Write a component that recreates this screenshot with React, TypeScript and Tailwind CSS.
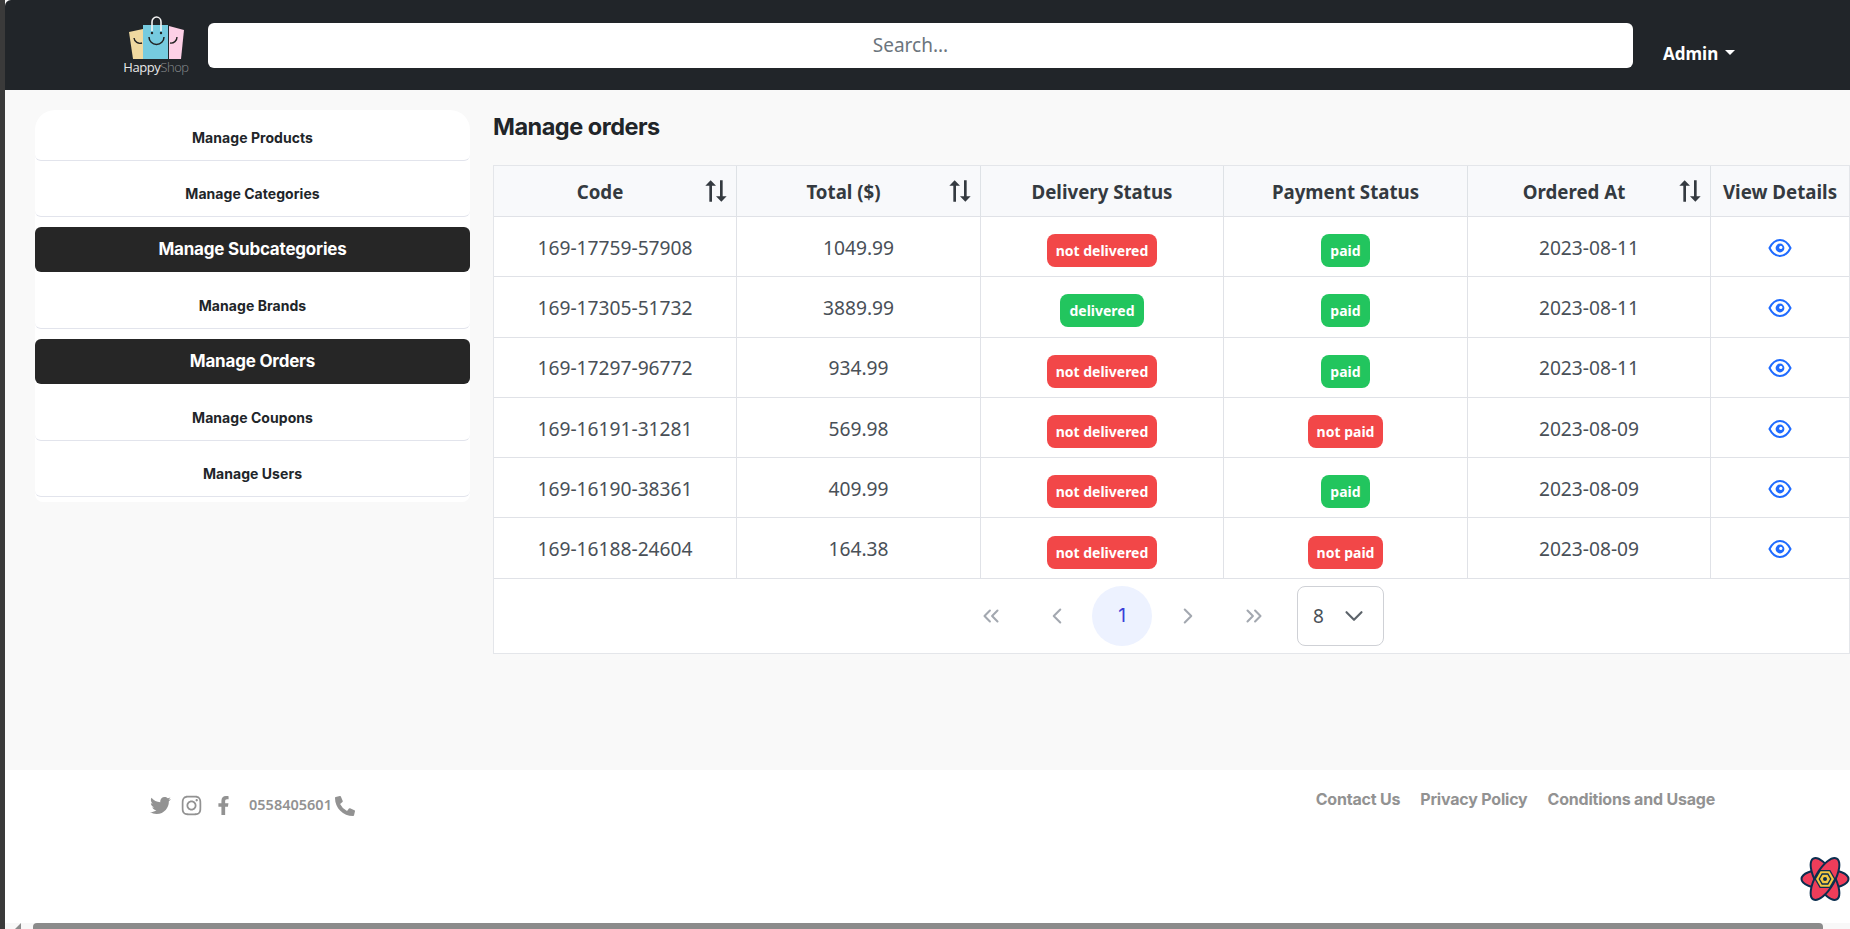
import { BiSortAlt2 } from 'react-icons/bi';
import { FaTwitter, FaFacebookF, FaPhoneAlt } from 'react-icons/fa';
import { AiOutlineInstagram } from 'react-icons/ai';
import { ChevronDown, ChevronLeft, ChevronRight, ChevronsLeft, ChevronsRight } from 'lucide-react';

const NAV = [
    { label: 'Manage Products' },
    { label: 'Manage Categories' },
    { label: 'Manage Subcategories', active: true },
    { label: 'Manage Brands' },
    { label: 'Manage Orders', active: true },
    { label: 'Manage Coupons' },
    { label: 'Manage Users' },
];

const ORDERS = [
    { code: '169-17759-57908', total: '1049.99', delivered: false, paid: true, date: '2023-08-11' },
    { code: '169-17305-51732', total: '3889.99', delivered: true, paid: true, date: '2023-08-11' },
    { code: '169-17297-96772', total: '934.99', delivered: false, paid: true, date: '2023-08-11' },
    { code: '169-16191-31281', total: '569.98', delivered: false, paid: false, date: '2023-08-09' },
    { code: '169-16190-38361', total: '409.99', delivered: false, paid: true, date: '2023-08-09' },
    { code: '169-16188-24604', total: '164.38', delivered: false, paid: false, date: '2023-08-09' },
];

const COLS = 'grid grid-cols-[243px_244px_243px_244px_243px_138px]';

function Logo() {
    return (
        <div className="flex flex-col items-center w-[64px]">
            <svg width="56" height="44" viewBox="0 0 56 44">
                <path d="M0 16 L14 13 L14 43 L4 43 Z" fill="#f0d9a0" />
                <path d="M40 10 L55 14 L52 43 L40 43 Z" fill="#fdd0e6" />
                <rect x="14" y="9" width="25" height="34" fill="#76cbdf" />
                <path d="M23 15 V6 a4.5 5 0 0 1 9 0 V15" fill="none" stroke="#f4f4f4" strokeWidth="1.6" />
                <circle cx="23" cy="17" r="1.2" fill="#222" />
                <circle cx="32" cy="17" r="1.2" fill="#222" />
                <path d="M20 21 a7.5 7.5 0 0 0 15 0" fill="none" stroke="#222" strokeWidth="1.5" />
                <path d="M5 22 a6 6 0 0 0 8 5 M41 27 a6 6 0 0 0 7 -6" fill="none" stroke="#222" strokeWidth="1.4" />
            </svg>
            <span className="ml-[-2px] text-[13px] leading-[14px] font-['Open_Sans',sans-serif] tracking-[-0.45px] text-[#e8e8e8]">
                Happy<span className="text-[#8a8d90] font-light">Shop</span>
            </span>
        </div>
    );
}

function Header() {
    return (
        <header className="h-[90px] shrink-0 bg-[#212529] rounded-tl-[6px] flex items-center">
            <div className="ml-[120px]">
                <Logo />
            </div>
            <div className="ml-[19px] w-[1425px] h-[45px] bg-white rounded-[6px] flex items-center justify-center text-[#6c757d] text-[19px] font-['Noto_Sans',sans-serif]">
                <span className="ml-[-20px]">Search...</span>
            </div>
            <div className="ml-[30px] mt-[17px] flex items-center text-white text-[17px] font-bold font-['Noto_Sans',sans-serif]">
                Admin
                <span className="ml-[7px] mt-[-2px] border-x-[5px] border-x-transparent border-t-[5px] border-t-white" />
            </div>
        </header>
    );
}

function Sidebar() {
    return (
        <aside className="w-[435px] ml-[30px] mt-[20px] shrink-0">
            <div className="flex flex-col bg-white rounded-t-[20px] rounded-b-[8px] pt-[5px] pb-[5px]">
                {NAV.map((item) =>
                    item.active ? (
                        <div
                            key={item.label}
                            className="h-[45px] mt-[10px] mb-[1px] bg-[#262626] rounded-[6px] flex items-center justify-center text-white text-[17px] font-bold font-['Inter',sans-serif] tracking-[-0.2px]"
                        >
                            {item.label}
                        </div>
                    ) : (
                        <div
                            key={item.label}
                            className="h-[46px] mt-[10px] first:mt-0 flex items-center justify-center rounded-b-[6px] border-b border-[#e2e4ec] text-[#212529] text-[14px] font-bold font-['Inter',sans-serif] tracking-[0.05px]"
                        >
                            {item.label}
                        </div>
                    ),
                )}
            </div>
        </aside>
    );
}

function Badge({ ok, text }: { ok: boolean; text: string }) {
    return (
        <span className={`inline-block mt-[8px] h-[33px] leading-[33px] px-[9px] rounded-[8px] text-white text-[14px] font-bold font-['Noto_Sans',sans-serif] ${ok ? 'bg-[#22c55e]' : 'bg-[#f24748]'}`}>
            {text}
        </span>
    );
}

function EyeIcon() {
    return (
        <svg viewBox="0 0 24 20" className="mt-[2px] w-[24px] h-[20px] text-[#1f6bff]">
            <path d="M1.5 10 C4 5 8 2 12 2 C16 2 20 5 22.5 10 C20 15 16 18 12 18 C8 18 4 15 1.5 10Z" fill="none" stroke="currentColor" strokeWidth="2" />
            <circle cx="12" cy="10" r="4.4" fill="currentColor" />
            <circle cx="12.8" cy="9.4" r="1.6" fill="#fff" />
        </svg>
    );
}

function HeadCell({ label, sort }: { label: string; sort?: boolean }) {
    return (
        <div className="relative flex items-center justify-center border-r border-[#dee2e6] last:border-r-0">
            <span className={sort ? 'mr-[30px] pt-[2px]' : 'pt-[2px]'}>{label}</span>
            {sort && <BiSortAlt2 className="absolute right-[4px] text-[32px] text-[#343a40]" />}
        </div>
    );
}

function Orders() {
    return (
        <main className="ml-[23px] mt-[19px] flex-1 min-w-0">
            <h1 className="h-[35px] mb-[21px] text-[23.5px] leading-[35px] font-bold text-[#212529] font-['Inter',sans-serif] tracking-[-0.5px]">Manage orders</h1>
            <div className="bg-white border border-[#e4e6ea] font-['Noto_Sans',sans-serif]">
                <div className={`${COLS} h-[50px] bg-[#f8f9fb] text-[18.7px] font-bold text-[#343a40]`}>
                    <HeadCell label="Code" sort />
                    <HeadCell label="Total ($)" sort />
                    <HeadCell label="Delivery Status" />
                    <HeadCell label="Payment Status" />
                    <HeadCell label="Ordered At" sort />
                    <HeadCell label="View Details" />
                </div>
                {ORDERS.map((o) => (
                    <div key={o.code} className={`${COLS} h-[60.3px] border-t border-[#e0e2e7] text-[19.2px] text-[#495057] [&>div]:flex [&>div]:items-center [&>div]:justify-center [&>div]:border-r [&>div]:border-[#e0e2e7] [&>div:last-child]:border-r-0`}>
                        <div><span className="pt-[3px]">{o.code}</span></div>
                        <div><span className="pt-[3px]">{o.total}</span></div>
                        <div><Badge ok={o.delivered} text={o.delivered ? 'delivered' : 'not delivered'} /></div>
                        <div><Badge ok={o.paid} text={o.paid ? 'paid' : 'not paid'} /></div>
                        <div><span className="pt-[3px]">{o.date}</span></div>
                        <div><EyeIcon /></div>
                    </div>
                ))}
                <div className="h-[75px] border-t border-[#e0e2e7] flex items-center pl-[484px] text-[#a3a8b0]">
                    <ChevronsLeft size={26} strokeWidth={1.9} />
                    <ChevronLeft size={26} strokeWidth={1.9} className="ml-[40px]" />
                    <div className="ml-[22px] w-[60px] h-[60px] rounded-full bg-[#edf2ff] flex items-center justify-center text-[#3b3fd8] text-[19px] font-['Inter',sans-serif]">1</div>
                    <ChevronRight size={26} strokeWidth={1.9} className="ml-[23px]" />
                    <ChevronsRight size={26} strokeWidth={1.9} className="ml-[40px]" />
                    <div className="ml-[30px] w-[87px] h-[60px] border border-[#cfd1d6] rounded-[8px] flex items-center pl-[15px] text-[#495057] text-[19px]">
                        8
                        <ChevronDown size={30} strokeWidth={1.7} className="ml-[15px] text-[#5c636a]" />
                    </div>
                </div>
            </div>
        </main>
    );
}

function Footer() {
    return (
        <footer className="h-[159px] shrink-0 bg-white flex items-start pt-[23px] text-[#929292] text-[16px] font-bold">
            <div className="ml-[145px] flex items-center font-['Noto_Sans',sans-serif]">
                <FaTwitter className="text-[21px]" />
                <AiOutlineInstagram className="text-[25px] ml-[8px]" />
                <FaFacebookF className="text-[19px] ml-[10px]" />
                <span className="ml-[16px] text-[14.5px] font-semibold mt-[-1px]">0558405601</span>
                <FaPhoneAlt className="text-[20px] ml-[3px]" />
            </div>
            <div className="ml-auto mr-[135px] mt-[-6px] flex gap-[20px] font-['Inter',sans-serif] tracking-[-0.2px]">
                <span>Contact Us</span>
                <span>Privacy Policy</span>
                <span>Conditions and Usage</span>
            </div>
        </footer>
    );
}

function hex(r: number) {
    return [0, 60, 120, 180, 240, 300]
        .map((a) => `${25 + r * Math.cos((a * Math.PI) / 180)},${23 + r * Math.sin((a * Math.PI) / 180)}`)
        .join(' ');
}

function ReactQueryMark() {
    return (
        <svg viewBox="0 0 50 46" className="absolute right-0 bottom-[27px] w-[50px] h-[46px]">
            <g fill="#ef3d5a" stroke="#0b2e4f" strokeWidth="2">
                <ellipse cx="25" cy="23" rx="23.5" ry="9.5" />
                <ellipse cx="25" cy="23" rx="23.5" ry="9.5" transform="rotate(60 25 23)" />
                <ellipse cx="25" cy="23" rx="23.5" ry="9.5" transform="rotate(120 25 23)" />
            </g>
            <polygon points={hex(10.5)} fill="#0b2e4f" />
            <polygon points={hex(9)} fill="#f4c842" />
            <polygon points={hex(6.5)} fill="#0b2e4f" />
            <polygon points={hex(5)} fill="#f4c842" />
            <circle cx="25" cy="23" r="2" fill="#0b2e4f" />
        </svg>
    );
}

function Scrollbar() {
    return (
        <div className="absolute left-[5px] right-0 bottom-0 h-[6px] bg-[#f8f8f8] flex items-center">
            <span className="ml-[10px] border-b-[6px] border-l-[6px] border-b-[#8b8b8b] border-l-transparent" />
            <div className="ml-[12px] w-[1790px] h-[6px] rounded-t-[4px] bg-[#8b8b8b]" />
        </div>
    );
}

export default function App() {
    return (
        <div className="relative flex h-[929px] w-[1850px] overflow-hidden bg-[#3a3a3a]">
            <div className="w-[5px] shrink-0" />
            <div className="flex-1 min-w-0 flex flex-col bg-[#f9f9f9]">
                <Header />
                <div className="flex-1 flex min-h-0">
                    <Sidebar />
                    <Orders />
                </div>
                <Footer />
            </div>
            <ReactQueryMark />
            <Scrollbar />
        </div>
    );
}
